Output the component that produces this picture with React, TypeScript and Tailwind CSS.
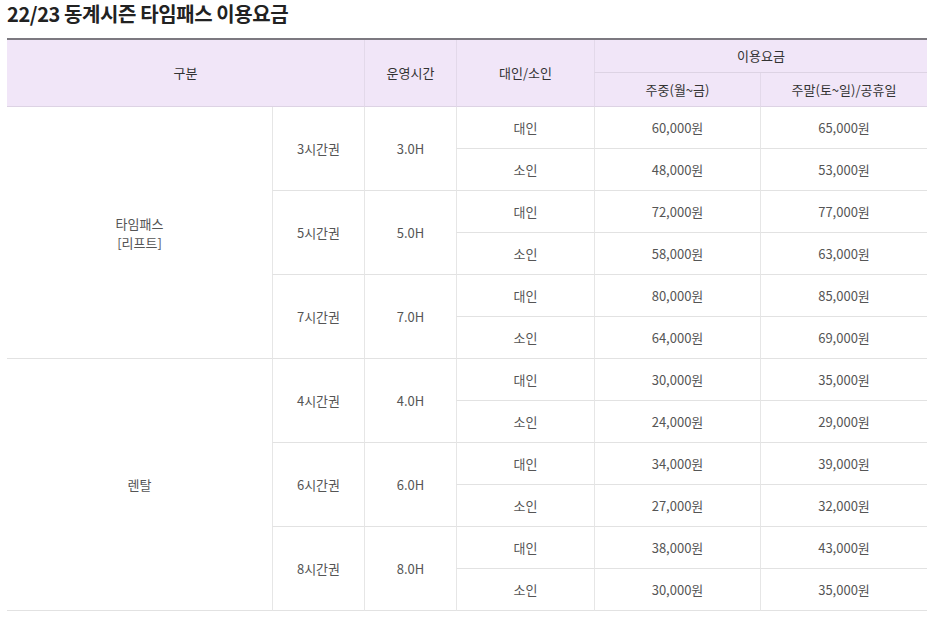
import React from "react";

type Sub = { label: string; hours: string; rows: [string, string, string][] };
type Group = { name: string[]; subs: Sub[] };

const groups: Group[] = [
  {
    name: ["타임패스", "[리프트]"],
    subs: [
      { label: "3시간권", hours: "3.0H", rows: [["대인", "60,000원", "65,000원"], ["소인", "48,000원", "53,000원"]] },
      { label: "5시간권", hours: "5.0H", rows: [["대인", "72,000원", "77,000원"], ["소인", "58,000원", "63,000원"]] },
      { label: "7시간권", hours: "7.0H", rows: [["대인", "80,000원", "85,000원"], ["소인", "64,000원", "69,000원"]] },
    ],
  },
  {
    name: ["렌탈"],
    subs: [
      { label: "4시간권", hours: "4.0H", rows: [["대인", "30,000원", "35,000원"], ["소인", "24,000원", "29,000원"]] },
      { label: "6시간권", hours: "6.0H", rows: [["대인", "34,000원", "39,000원"], ["소인", "27,000원", "32,000원"]] },
      { label: "8시간권", hours: "8.0H", rows: [["대인", "38,000원", "43,000원"], ["소인", "30,000원", "35,000원"]] },
    ],
  },
];

const hd = "flex items-center justify-center bg-[#f1e6f8] text-[13px] text-[#333] border-b border-[#ddd3e4]";
const hdl = `${hd} border-l border-l-[#e3d9ea]`;
const bd = "flex items-center justify-center text-[13px] text-[#555] border-b border-[#e2e2e2]";
const bdl = `${bd} border-l border-l-[#e6e6e6]`;

export default function App() {
  return (
    <div className="w-[934px] h-[624px] bg-white px-[7px] font-['Noto_Sans_CJK_KR','Noto_Sans',sans-serif]">
      <h1 className="h-[38px] text-[20px] font-bold text-[#222] leading-[28px] tracking-[-0.4px]">
        22/23 동계시즌 타임패스 이용요금
      </h1>
      <div className="grid w-[920px] border-t-2 border-[#7c7980] grid-cols-[265px_92px_92px_138px_166px_167px] grid-rows-[33px_34px_repeat(12,42px)]">
        <div className={`${hd} col-span-2 row-span-2`}>구분</div>
        <div className={`${hdl} row-span-2`}>운영시간</div>
        <div className={`${hdl} row-span-2`}>대인/소인</div>
        <div className={`${hdl} col-span-2`}>이용요금</div>
        <div className={hdl}>주중(월~금)</div>
        <div className={hdl}>주말(토~일)/공휴일</div>
        {groups.map((g, gi) => (
          <React.Fragment key={gi}>
            <div className={`${bd} row-span-6 flex-col leading-[19px]`}>
              {g.name.map((n) => (
                <span key={n}>{n}</span>
              ))}
            </div>
            {g.subs.map((s, si) => (
              <React.Fragment key={si}>
                <div className={`${bdl} row-span-2`}>{s.label}</div>
                <div className={`${bdl} row-span-2`}>{s.hours}</div>
                {s.rows.map((rw, ri) =>
                  rw.map((t, ci) => (
                    <div key={`${ri}-${ci}`} className={bdl}>
                      {t}
                    </div>
                  ))
                )}
              </React.Fragment>
            ))}
          </React.Fragment>
        ))}
      </div>
    </div>
  );
}
